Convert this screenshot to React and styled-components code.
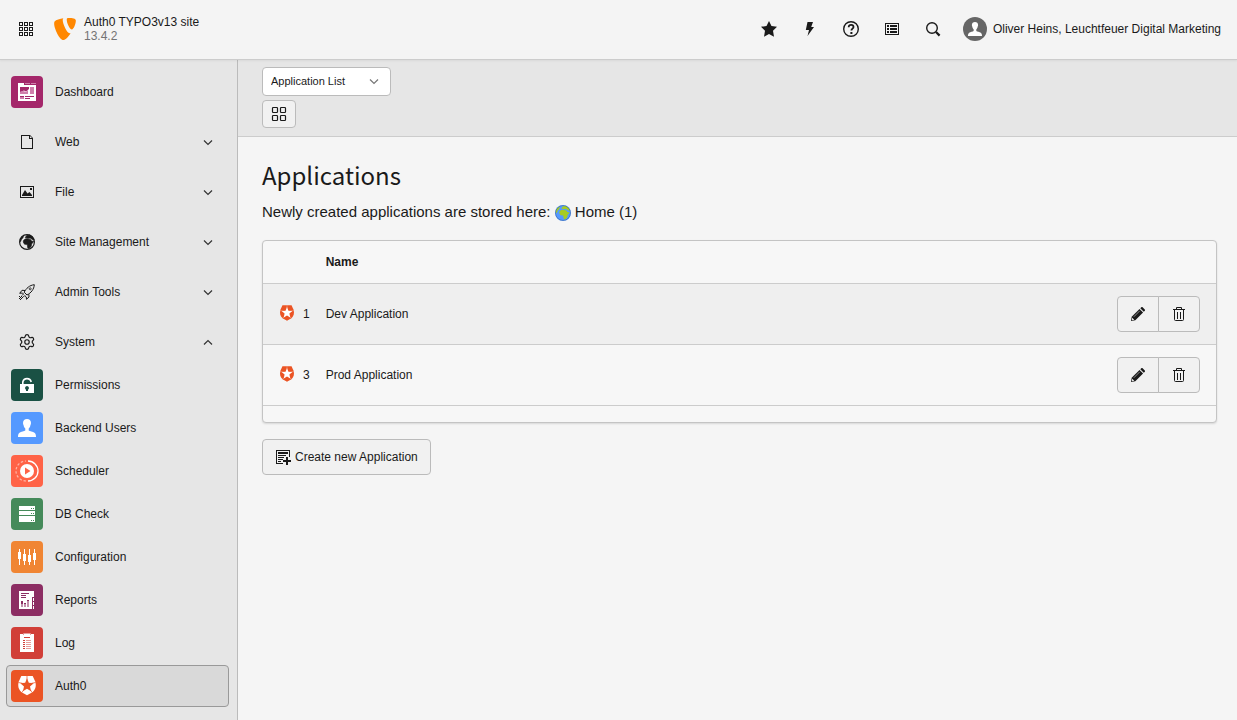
import React from 'react';
import styled, { createGlobalStyle } from 'styled-components';
import { Settings } from 'lucide-react';
import { SiTypo3 } from 'react-icons/si';

const GlobalStyle = createGlobalStyle`
* {
    box-sizing: border-box;
}

body {
    margin: 0;
    background: #f5f5f5;
    color: #1a1a1a;
    font-family: "Liberation Sans", Arial, sans-serif;
    font-size: 12px;
    line-height: 18px;
}

button, select {
    font: inherit;
    color: inherit;
    cursor: pointer;
}

a {
    color: inherit;
    text-decoration: none;
}

svg {
    display: block;
    flex: none;
}
`;

const Page = styled.div`
display: flex;
flex-direction: column;
min-height: 100vh;
`;

const Topbar = styled.header`
display: flex;
align-items: center;
height: 60px;
padding: 0 16px 1px 18px;
background: #f4f4f4;
border-bottom: 1px solid #ccc;
box-shadow: 0 1px 2px rgba(0, 0, 0, 0.06);
position: relative;
`;

const IconButton = styled.button`
display: flex;
padding: 0;
border: 0;
background: none;
`;

const SiteLink = styled.a`
display: flex;
align-items: center;
gap: 8px;
margin-left: 20px;
line-height: 14px;
`;

const TypoLogo = styled(SiTypo3)`
width: 22px;
height: 22px;
color: #ff8700;
`;

const SiteVersion = styled.div`
color: #737373;
`;

const Toolbar = styled.div`
display: flex;
gap: 25px;
margin-left: auto;
`;

const UserButton = styled(IconButton)`
align-items: center;
gap: 6px;
margin-left: 22px;
`;

const Body = styled.div`
display: flex;
flex: 1;
`;

const Sidebar = styled.nav`
display: flex;
flex-direction: column;
gap: 8px;
flex: none;
width: 238px;
padding: 11px 8px 12px 6px;
background: #e6e6e6;
border-right: 1px solid #bbb;
`;

const SubMenu = styled.div`
display: flex;
flex-direction: column;
gap: 1px;
`;

const MenuItem = styled.a`
display: flex;
align-items: center;
gap: 12px;
width: 100%;
height: 42px;
padding: 0 12px 0 4px;
border: 1px solid ${props => props.$active ? '#999' : 'transparent'};
border-radius: 4px;
background: ${props => props.$active ? '#d9d9d9' : 'transparent'};
text-align: left;
`;

const MenuIcon = styled.span`
display: flex;
align-items: center;
justify-content: center;
width: 32px;
height: 32px;
border-radius: 4px;
background: ${props => props.$color || 'transparent'};
`;

const MenuLabel = styled.span`
flex: 1;
`;

const Main = styled.main`
flex: 1;
min-width: 0;
`;

const DocHeader = styled.div`
display: flex;
flex-direction: column;
align-items: flex-start;
gap: 4px;
padding: 7px 24px 8px;
background: #e6e6e6;
border-bottom: 1px solid #ccc;
`;

const SelectWrapper = styled.label`
position: relative;
display: flex;

& > svg {
    position: absolute;
    right: 9px;
    top: 6px;
    pointer-events: none;
}
`;

const Select = styled.select`
appearance: none;
width: 129px;
height: 29px;
padding: 0 32px 2px 8px;
border: 1px solid #bbb;
border-radius: 4px;
background: #fff;
font-size: 11px;
`;

const Button = styled.button`
display: inline-flex;
align-items: center;
gap: 4px;
height: ${props => props.$small ? '28px' : '36px'};
padding: 0 ${props => props.$small ? '8px' : '12px'};
border: 1px solid #bbb;
border-radius: 4px;
background: #f1f1f1;
`;

const Content = styled.div`
padding: 20px 20px 24px 24px;
`;

const Title = styled.h1`
margin: 0 0 7px;
font-family: "Noto Sans CJK SC", sans-serif;
font-size: 24px;
font-weight: 400;
line-height: 36px;
`;

const Lead = styled.p`
margin: 0 0 16px;
font-size: 15px;
line-height: 24px;

& > svg {
    display: inline-block;
    vertical-align: -4px;
}
`;

const TablePanel = styled.div`
margin-bottom: 16px;
padding-bottom: 16px;
border: 1px solid #c4c4c4;
border-radius: 4px;
background: #f7f7f7;
box-shadow: 0 1px 2px rgba(0, 0, 0, 0.12);
overflow: hidden;
`;

const Table = styled.table`
width: 100%;
border-collapse: separate;
border-spacing: 0;
`;

const HeadCell = styled.th`
height: 43px;
padding: 0 8px;
border-bottom: 1px solid #ccc;
text-align: left;
`;

const Row = styled.tr`
&:nth-child(odd) {
    background: #efefef;
}
`;

const Cell = styled.td`
width: ${props => props.$grow ? '100%' : 'auto'};
padding: 12px 8px;
border-bottom: 1px solid #ccc;
white-space: nowrap;

&:first-child {
    padding-left: 16px;
}

&:last-child {
    padding-right: 16px;
}
`;

const RecordId = styled.div`
display: flex;
align-items: center;
gap: 8px;

& > svg {
    margin-bottom: 2px;
}
`;

const ButtonGroup = styled.div`
display: flex;

& > button:first-child {
    border-radius: 4px 0 0 4px;
}

& > button:last-child {
    margin-left: -1px;
    border-radius: 0 4px 4px 0;
}
`;

const Icon = ({size = 16, children}) => (
    <svg width={size} height={size} viewBox={`0 0 ${size} ${size}`} fill="currentColor" aria-hidden="true">{children}</svg>
);

const GridIcon = () => (
    <Icon>
        <g fill="none" stroke="currentColor">
            {[1, 6, 11].map(y => [1, 6, 11].map(x => (
                <rect key={`${x}-${y}`} x={x + 0.5} y={y + 0.5} width="3" height="3" />
            )))}
        </g>
    </Icon>
);

const StarIcon = () => (
    <Icon><path d="m8 0 2.500 5 5.500.8-4 4 1 5.900L8 13l-5 2.700 1-5.900-4-4L5.500 5z" /></Icon>
);

const BoltIcon = () => (
    <Icon><path d="M5.500 1H11L9.200 6H12L5.500 15 7 9H3.800z" /></Icon>
);

const HelpIcon = () => (
    <Icon>
        <circle cx="8" cy="8" r="7.3" fill="none" stroke="currentColor" strokeWidth="1.4" />
        <path d="M5.7 6.2C5.7 4.6 6.7 3.8 8.1 3.8s2.4.8 2.4 2.1c0 1.7-2.1 1.8-2.1 3.6" fill="none" stroke="currentColor" strokeWidth="1.8" />
        <rect x="7.4" y="11" width="2" height="2" />
    </Icon>
);

const ListIcon = () => (
    <Icon>
        <path d="M1 2h14v12H1zm1 1v10h12V3z" fillRule="evenodd" />
        <path d="M3 4h2v2H3zm3 0h7v2H6zM3 7h2v2H3zm3 0h7v2H6zm-3 3h2v2H3zm3 0h7v2H6z" />
    </Icon>
);

const SearchIcon = () => (
    <Icon>
        <circle cx="7" cy="7" r="5.3" fill="none" stroke="currentColor" strokeWidth="1.4" />
        <path d="m11 11 3.6 3.6" stroke="currentColor" strokeWidth="2.2" />
    </Icon>
);

const person = 'M16 7c-2.4 0-4 1.6-4 4 0 1 .3 1.7.6 2.2.3 1.7 1 2.6 1.7 3.3v2.1c-1 1-4.3 1-5.8 2.200C7.3 21.8 7 23.3 7 25h18c0-1.7-.3-3.2-1.5-4.2-1.500-1.200-4.800-1.200-5.800-2.200v-2.100c.7-.7 1.4-1.6 1.7-3.3.3-.5.6-1.2.6-2.2 0-2.4-1.6-4-4-4z';

const Avatar = () => (
    <Icon size={24}>
        <circle cx="12" cy="12" r="12" fill="#666" />
        <path d={person} fill="#fff" transform="translate(-0.5 -0.5) scale(0.78)" />
    </Icon>
);

const PageIcon = () => (
    <Icon><path d="M2 1h9l3 3v11H2zm1 1v12h10V5h-3V2zm8 0v2h2z" fillRule="evenodd" /></Icon>
);

const ImageIcon = () => (
    <Icon>
        <path d="M1 2h14v12H1zm1 1v10h12V3z" fillRule="evenodd" />
        <path d="M3 12v-1l3-5 2.5 3.5L10.5 8 13 11v1zM11 4h2v2h-2z" />
    </Icon>
);

const africa = 'M4.8 6 6.8 4.8 9 5l2.500.5 1 1.500 2.300.5-2.200 2.500-.4 2.500-2.200 2-1.200-.5-.6-3.500-2.700-.3-1.300-2.200z';
const europe = 'M6.300 3.600 7.700 1.600 10.500.9l3 2 1.500 3-2-.7-1.800-1.200-2.600.3z';
const america = 'M.8 6.500 2.200 3.300 4.800 1.400 4.400 3.800 2.700 5.600 1.700 8.500z';

const GlobeIcon = () => (
    <Icon>
        <circle cx="8" cy="8" r="7.4" fill="none" stroke="currentColor" strokeWidth="1.2" />
        <path d={africa} stroke="currentColor" strokeWidth="0.6" />
        <path d={europe} stroke="currentColor" strokeWidth="0.8" />
        <path d={america} />
    </Icon>
);

const HomeGlobeIcon = () => (
    <Icon>
        <circle cx="8" cy="8" r="8" fill="#5599ff" />
        <g fill="#a6cc22">
            <path d={africa} />
            <path d={europe} />
            <path d={america} />
        </g>
        <circle cx="8" cy="8" r="7.5" fill="none" stroke="#000" strokeOpacity="0.2" />
    </Icon>
);

const RocketIcon = () => (
    <Icon>
        <g fill="none" stroke="currentColor">
            <path d="M5.2 8.2C7.2 4.3 10.5 1.2 15.3.7c-.3 4.600-3.200 8.200-7.300 10.300z" />
            <path d="M6.2 6.5 3 6.3.7 9.3l2.800-.3 1 1-1.500 1.500M9.800 10.200l.2 2.800-2.500 2.300-.2-2.300-1.600-1.400-1.500 1.500" />
            <circle cx="11.2" cy="4.8" r="1" strokeWidth="0.8" />
        </g>
        <path d="M0 12h1v1H0zm2 0h1v1H2zm-1 1h1v1H1zm2 0h1v1H3zm-3 1h1v1H0zm2 0h1v1H2zm-1 1h1v1H1z" />
    </Icon>
);

const CogIcon = () => <Settings size={16} strokeWidth={1.6} viewBox="1.2 1.2 21.6 21.6" aria-hidden="true" />;

const ChevronIcon = ({up, color = '#333'}) => (
    <Icon><path d={up ? 'm4 10.500 4-4 4 4' : 'm4 6.500 4 4 4-4'} fill="none" stroke={color} strokeWidth="1.2" /></Icon>
);

const TilesIcon = () => (
    <Icon>
        <g fill="none" stroke="currentColor" strokeWidth="1.2">
            <rect x="1.5" y="1.5" width="5" height="5" rx="0.8" />
            <rect x="9.5" y="1.5" width="5" height="5" rx="0.8" />
            <rect x="1.5" y="9.5" width="5" height="5" rx="0.8" />
            <rect x="9.5" y="9.5" width="5" height="5" rx="0.8" />
        </g>
    </Icon>
);

const PencilIcon = () => (
    <Icon>
        <path d="m1 15 .7-4.300 7.800-7.800 3.600 3.600-7.800 7.800z" />
        <path d="m10.300 2.200 1-1c.4-.4.9-.4 1.300 0l2.200 2.200c.4.4.4.9 0 1.300l-1 1z" />
        <path d="M3.8 10.8 9.7 4.9" stroke="#999" strokeWidth="0.9" />
        <path d="m2.200 11.800 2 2-1.600.4-.8-.8z" fill="#f1f1f1" />
    </Icon>
);

const TrashIcon = () => (
    <Icon>
        <path d="M2 3h12v1H2zM6 6h1v7H6zm3 0h1v7H9z" />
        <path d="M5.5 3V1.500h5V3M3.500 4v9.500a1 1 0 0 0 1 1h7a1 1 0 0 0 1-1V4" fill="none" stroke="currentColor" />
    </Icon>
);

const AddRecordIcon = () => (
    <Icon>
        <path d="M1 1h14v7h-1V2H2v12h6v1H1z" />
        <path d="M3 3h10v2H3zm0 3h8v1H3zm0 2h6v1H3zm0 2h5v1H3zm0 2h3v1H3z" />
        <path d="M11 8h2v3h3v2h-3v3h-2v-3H8v-2h3z" />
    </Icon>
);

const Auth0Mark = ({color, star, gap}) => (
    <>
        <path d="M10.300 6h11.400l2.500 5.500c1.300 4.500.3 8.500-3.200 11L16 25.300l-5-2.800c-3.500-2.500-4.500-6.500-3.200-11z" fill={color} />
        <path d="M16 6v4M7.500 12.500l4 .8M24.500 12.500l-4 .8M10.700 22.800l2-3M21.300 22.800l-2-3" stroke={gap} strokeWidth="0.7" fill="none" />
        <path d="m16 8.300 1.800 4.500 4.900.4-3.700 3.200 1.100 4.800-4.100-2.500-4.100 2.500 1.100-4.800-3.700-3.200 4.900-.4z" fill={star} />
    </>
);

const Auth0Icon = () => (
    <svg width="16" height="16" viewBox="6 5.700 20 20" aria-hidden="true">
        <Auth0Mark color="#eb5424" star="#fff" gap="#f4a58b" />
    </svg>
);

const DashboardIcon = () => (
    <Icon size={32}>
        <path d="M7 7h6v2h12v16H7z" fill="#fff" />
        <path d="M14 7h5v1h-5zm6 0h5v1h-5zM19 11h4v7h-4zM9 21h4v2H9zM9 16l3-1 3 1 2-2v4H9z" fill="#cf7fab" />
        <path d="M9 11h9v2l-3 2.500-2-1-4 1.500zm0 9h4v1H9zm5 0h9v1h-9zm0 2h5v1h-5z" fill="#a4276a" />
    </Icon>
);

const PermissionsIcon = () => (
    <Icon size={32}>
        <path d="M9 15h14v9H9zm7 2a2 2 0 0 0-1 3.700V22h2v-1.300A2 2 0 0 0 16 17z" fill="#fff" fillRule="evenodd" />
        <path d="M11.800 15.500V13a4.300 4.300 0 0 1 8.400 0" fill="none" stroke="#fff" strokeWidth="1.6" />
    </Icon>
);

const UserIcon = () => <Icon size={32}><path d={person} fill="#fff" /></Icon>;

const SchedulerIcon = () => (
    <Icon size={32}>
        <circle cx="16" cy="16" r="7" fill="#fff" />
        <path d="m14 12.500 5.500 3.500-5.500 3.500z" fill="#ff6347" />
        <path d="M17 6a10 10 0 0 1 0 20" fill="none" stroke="#fff" strokeWidth="1.3" />
        <path d="M15 26a10 10 0 0 1 0-20" fill="none" stroke="#ffb5a6" strokeWidth="1.2" strokeDasharray="2.5 1.8" />
    </Icon>
);

const DatabaseIcon = () => (
    <Icon size={32}>
        <path d="M8 8h16v4H8zm0 5h16v4H8zm0 5h16v6H8z" fill="#fff" />
        <path d="M20 10h1v1h-1zm2 0h1v1h-1zm-2 5h1v1h-1zm2 0h1v1h-1zm-2 7h1v1h-1zm2 0h1v1h-1z" fill="#458a5a" />
    </Icon>
);

const ConfigurationIcon = () => (
    <Icon size={32}>
        <path d="M7 11h3v7H7zm5 2h3v7h-3zm5 1h3v7h-3zm5-2h3v7h-3zM8 8h1v16H8zm5 0h1v16h-1zm5 0h1v16h-1zm5 0h1v16h-1z" fill="#fff" />
    </Icon>
);

const ReportsIcon = () => (
    <Icon size={32}>
        <path d="M8 7h15v18H8z" fill="#fff" />
        <path d="M10 20h2v3h-2zm3 0h2v3h-2zm3-3h2v6h-2z" fill="#c391ad" />
        <path d="M10 9h8v1h-8zm0 2h5v1h-5zm0 2h5v1h-5zm0 4h2v3h-2zm3 2h2v1h-2zm3-3h2v1h-2zM21 13h2v1h-1v11h-1zm1 4h1v1h-1zm0 4h1v1h-1z" fill="#8c2d63" />
    </Icon>
);

const LogIcon = () => (
    <Icon size={32}>
        <path d="M9 7h14v18H9z" fill="#fff" />
        <path d="M12 7a1 1 0 0 1 1-1h6a1 1 0 0 1 1 1v1h-8zM15 13h5v1h-5zm0 2h5v1h-5zm0 2h5v1h-5zm0 2h5v1h-5zm0 2h5v1h-5z" fill="#e79c99" />
        <path d="M13 10h6v1h-6zm-1 3h2v1h-2zm0 2h2v1h-2zm0 2h2v1h-2zm0 2h2v1h-2zm0 2h2v1h-2z" fill="#d13f38" />
        <path d="M13 7h6v1h-6z" fill="#fff" />
    </Icon>
);

const Auth0ModuleIcon = () => (
    <Icon size={32}><Auth0Mark color="#fff" star="#eb5424" gap="#eb5424" /></Icon>
);

const groups = [
    { label: 'Web', icon: <PageIcon /> },
    { label: 'File', icon: <ImageIcon /> },
    { label: 'Site Management', icon: <GlobeIcon /> },
    { label: 'Admin Tools', icon: <RocketIcon /> },
];

const systemModules = [
    { label: 'Permissions', color: '#1a5144', icon: <PermissionsIcon /> },
    { label: 'Backend Users', color: '#5599ff', icon: <UserIcon /> },
    { label: 'Scheduler', color: '#ff6347', icon: <SchedulerIcon /> },
    { label: 'DB Check', color: '#458a5a', icon: <DatabaseIcon /> },
    { label: 'Configuration', color: '#f08533', icon: <ConfigurationIcon /> },
    { label: 'Reports', color: '#8c2d63', icon: <ReportsIcon /> },
    { label: 'Log', color: '#d13f38', icon: <LogIcon /> },
    { label: 'Auth0', color: '#eb5424', icon: <Auth0ModuleIcon />, active: true },
];

const applications = [
    { id: 1, name: 'Dev Application' },
    { id: 3, name: 'Prod Application' },
];

const Module = ({label, color, icon, active}) => (
    <MenuItem href="#" $active={active} aria-current={active ? 'page' : undefined}>
        <MenuIcon $color={color}>{icon}</MenuIcon>
        <MenuLabel>{label}</MenuLabel>
    </MenuItem>
);

const Group = ({label, icon, open}) => (
    <MenuItem as="button" type="button" aria-expanded={!!open}>
        <MenuIcon>{icon}</MenuIcon>
        <MenuLabel>{label}</MenuLabel>
        <ChevronIcon up={open} />
    </MenuItem>
);

const App = () => {
    return (
        <Page>
            <GlobalStyle />
            <Topbar>
                <IconButton aria-label="Toggle menu"><GridIcon /></IconButton>
                <SiteLink href="#">
                    <TypoLogo aria-hidden="true" />
                    <div>
                        <div>Auth0 TYPO3v13 site</div>
                        <SiteVersion>13.4.2</SiteVersion>
                    </div>
                </SiteLink>
                <Toolbar>
                    <IconButton aria-label="Bookmarks"><StarIcon /></IconButton>
                    <IconButton aria-label="Clear cache"><BoltIcon /></IconButton>
                    <IconButton aria-label="Help"><HelpIcon /></IconButton>
                    <IconButton aria-label="System information"><ListIcon /></IconButton>
                    <IconButton aria-label="Search"><SearchIcon /></IconButton>
                </Toolbar>
                <UserButton>
                    <Avatar />
                    <span>Oliver Heins, Leuchtfeuer Digital Marketing</span>
                </UserButton>
            </Topbar>
            <Body>
                <Sidebar>
                    <Module label="Dashboard" color="#a4276a" icon={<DashboardIcon />} />
                    {groups.map(item => <Group key={item.label} {...item} />)}
                    <SubMenu>
                        <Group label="System" icon={<CogIcon />} open />
                        {systemModules.map(item => <Module key={item.label} {...item} />)}
                    </SubMenu>
                </Sidebar>
                <Main>
                    <DocHeader>
                        <SelectWrapper>
                            <Select aria-label="View" defaultValue="list">
                                <option value="list">Application List</option>
                            </Select>
                            <ChevronIcon color="#777" />
                        </SelectWrapper>
                        <Button $small aria-label="Show tiles"><TilesIcon /></Button>
                    </DocHeader>
                    <Content>
                        <Title>Applications</Title>
                        <Lead>Newly created applications are stored here: <HomeGlobeIcon /> Home (1)</Lead>
                        <TablePanel>
                            <Table>
                                <thead>
                                    <tr>
                                        <HeadCell />
                                        <HeadCell>Name</HeadCell>
                                        <HeadCell />
                                    </tr>
                                </thead>
                                <tbody>
                                    {applications.map(item => (
                                        <Row key={item.id}>
                                            <Cell><RecordId><Auth0Icon />{item.id}</RecordId></Cell>
                                            <Cell $grow>{item.name}</Cell>
                                            <Cell>
                                                <ButtonGroup>
                                                    <Button aria-label={`Edit ${item.name}`}><PencilIcon /></Button>
                                                    <Button aria-label={`Delete ${item.name}`}><TrashIcon /></Button>
                                                </ButtonGroup>
                                            </Cell>
                                        </Row>
                                    ))}
                                </tbody>
                            </Table>
                        </TablePanel>
                        <Button><AddRecordIcon />Create new Application</Button>
                    </Content>
                </Main>
            </Body>
        </Page>
    );
};

export default App;
